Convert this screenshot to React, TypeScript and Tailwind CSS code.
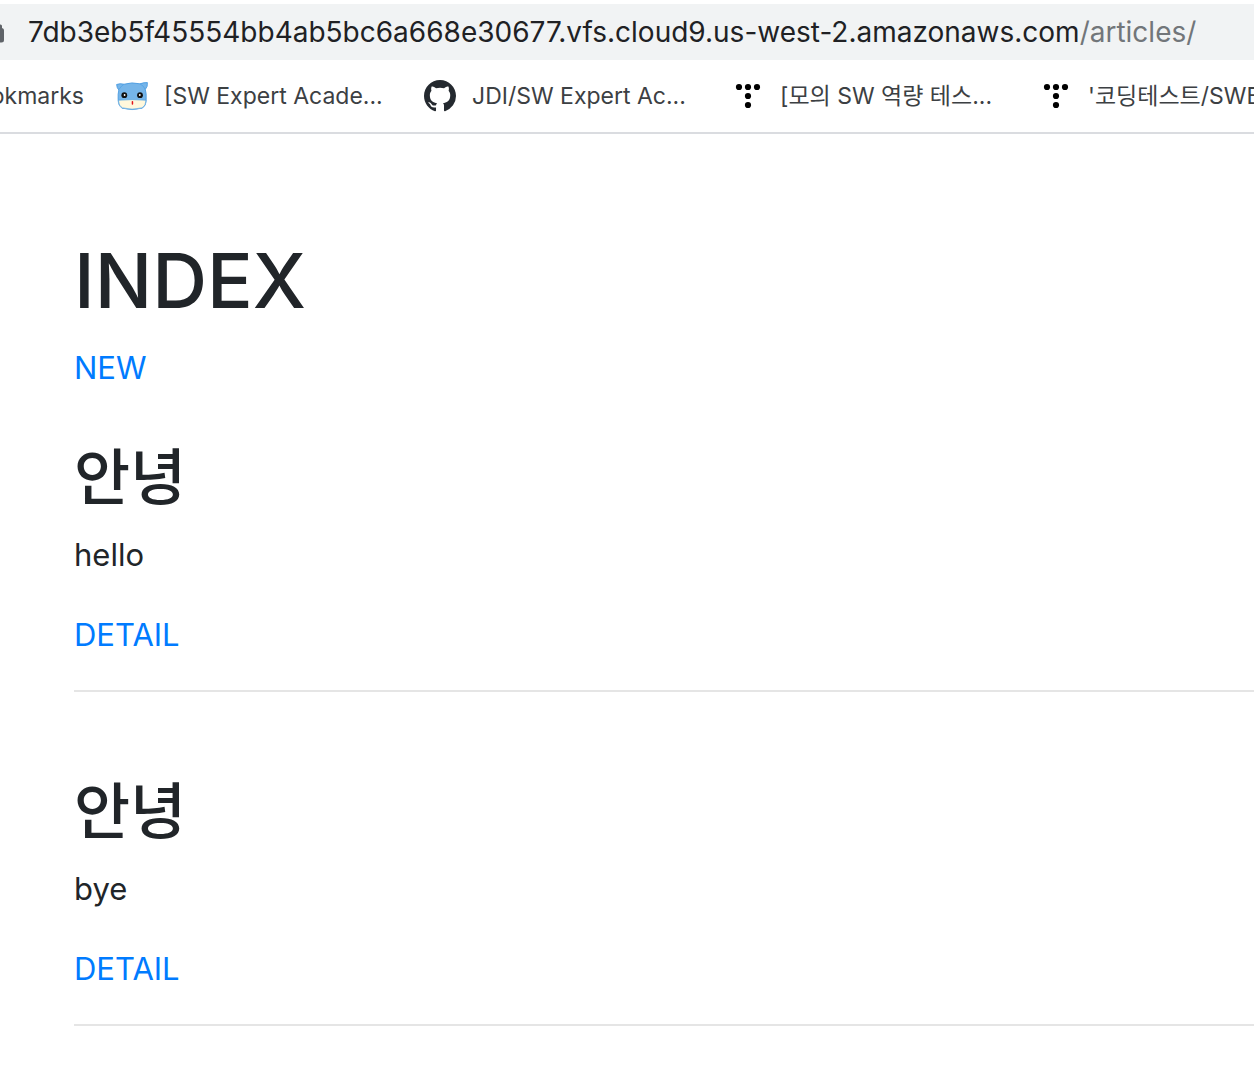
import React from "react";

const articles = [
  { id: 1, title: "안녕", content: "hello" },
  { id: 2, title: "안녕", content: "bye" },
];

function LockIcon() {
  return (
    <svg viewBox="0 0 20 24" className="h-6 w-5 shrink-0" aria-hidden="true">
      <path d="M5 8V5.500a5 5 0 0 1 10 0V8h2.500a2.500 2.500 0 0 1 2.500 2.500v9.500a2.500 2.500 0 0 1-2.500 2.500h-15A2.500 2.500 0 0 1 0 20v-9.500A2.500 2.500 0 0 1 2.500 8Z" fill="#5f6368" />
      <path d="M7.300 8V5.500a2.700 2.700 0 0 1 5.400 0V8Z" fill="#f1f3f4" />
      <path d="M15 4.500h1.500a1.500 1.500 0 0 1 1.500 1.500v3h-3Z" fill="#5f6368" />
    </svg>
  );
}

function CatIcon() {
  return (
    <svg viewBox="0 0 32 32" className="size-8 shrink-0" aria-hidden="true">
      <path
        d="M.6 4.500 Q4 3 8 4.200 Q16 1.800 24 3.800 Q28 2.300 31.400 2.600 Q32 6.500 29.300 9.500 Q30.500 13 30.200 19 Q30.300 26 26 28.200 Q16 31 6.200 28.200 Q2.200 26 2.100 19 Q1.800 14 2.800 10 Q.8 8 .6 4.500Z"
        fill="#76b5e9"
        stroke="#3d94de"
        strokeWidth=".8"
      />
      <path d="M2.300 20.200 Q16 19 30 20.200 Q30 26 26 27.900 Q16 30.500 6.400 27.900 Q2.500 26 2.300 20.200Z" fill="#fff8dc" stroke="#4a9fe5" strokeWidth=".7" />
      <path d="M3 9.500 Q5 6 8 4.200 M24 3.800 Q27.500 5.500 29.300 9.500" fill="none" stroke="#4a9fe5" strokeWidth=".7" />
      <circle cx="8.300" cy="15.200" r="2.900" fill="#111" />
      <circle cx="24" cy="15.200" r="2.900" fill="#111" />
      <circle cx="8.600" cy="15" r=".9" fill="#fff" />
      <circle cx="23.800" cy="15" r=".9" fill="#fff" />
      <rect x="15.700" y="21" width="1.500" height="3.800" rx=".7" fill="#e3141b" />
    </svg>
  );
}

function GithubIcon() {
  return (
    <svg viewBox="0 0 16 16" className="size-8 shrink-0" fill="#24292f" aria-hidden="true">
      <path d="M8 0C3.580 0 0 3.580 0 8c0 3.540 2.290 6.530 5.470 7.590.4.070.55-.17.55-.38 0-.19-.01-.82-.01-1.490-2.010.37-2.530-.49-2.690-.94-.09-.23-.48-.94-.82-1.130-.28-.15-.68-.52-.01-.53.63-.01 1.080.58 1.230.82.72 1.210 1.870.87 2.330.66.07-.52.28-.87.51-1.070-1.780-.2-3.640-.89-3.640-3.950 0-.87.31-1.590.82-2.150-.08-.2-.36-1.020.08-2.120 0 0 .67-.21 2.200.82.64-.18 1.320-.27 2-.27s1.360.09 2 .27c1.530-1.040 2.200-.82 2.200-.82.44 1.100.16 1.920.08 2.120.51.56.82 1.270.82 2.150 0 3.070-1.870 3.750-3.650 3.950.29.25.54.73.54 1.480 0 1.070-.01 1.930-.01 2.200 0 .21.15.46.55.38A8.010 8.010 0 0 0 16 8c0-4.420-3.580-8-8-8Z" />
    </svg>
  );
}

function TistoryIcon() {
  return (
    <svg viewBox="0 0 32 32" className="size-8 shrink-0" aria-hidden="true">
      <circle cx="7" cy="7" r="3.100" />
      <circle cx="16" cy="7" r="3.100" />
      <circle cx="25" cy="7" r="3.100" />
      <circle cx="16" cy="16" r="3.100" />
      <circle cx="16" cy="25" r="3.100" />
    </svg>
  );
}

const bookmarks = [
  { label: "[SW Expert Acade...", icon: <CatIcon /> },
  { label: "JDI/SW Expert Ac...", icon: <GithubIcon /> },
  { label: "[모의 SW 역량 테스...", icon: <TistoryIcon /> },
  { label: "'코딩테스트/SWE", icon: <TistoryIcon /> },
];

export default function App() {
  return (
    <div className="min-h-screen overflow-hidden bg-white font-['Inter','Noto_Sans_CJK_KR',sans-serif] text-[#212529]">
      <header className="border-b-2 border-[#dadce0] pt-1">
        <div className="flex h-14 items-center gap-6 overflow-hidden bg-[#f1f3f4]">
          <div className="flex w-1 shrink-0 justify-end">
            <LockIcon />
          </div>
          <div aria-label="Address" className="whitespace-nowrap text-[28px] leading-8 text-[#202124]">
            7db3eb5f45554bb4ab5bc6a668e30677.vfs.cloud9.us-west-2.amazonaws.com
            <span className="text-[#72767a]">/articles/</span>
          </div>
        </div>
        <nav aria-label="Bookmarks" className="flex h-[72px] items-center overflow-hidden text-[23px] text-[#3c4043]">
          <a href="#bookmarks" className="mr-8 flex w-[84px] shrink-0 justify-end whitespace-nowrap">
            okmarks
          </a>
          {bookmarks.map((b) => (
            <a key={b.label} href="#bookmark" className="flex w-[308px] shrink-0 items-center gap-4 whitespace-nowrap">
              {b.icon}
              <span>{b.label}</span>
            </a>
          ))}
        </nav>
      </header>

      <main className="pt-[98px] pl-[74px] text-[31px] leading-[48px]">
        <h1 className="mb-4 text-[76px] leading-[96px] font-medium">INDEX</h1>
        <a href="#new" className="mb-[46px] block w-fit text-[#007bff]">
          NEW
        </a>
        {articles.map((a) => (
          <article key={a.id} className="mb-20">
            <h2 className="mb-[13px] text-[61px] leading-[80px] font-medium">{a.title}</h2>
            <p className="mb-8">{a.content}</p>
            <a href="#detail" className="block w-fit text-[#007bff]">
              DETAIL
            </a>
            <hr className="mt-[31px] border-t-2 border-[#e5e5e5]" />
          </article>
        ))}
      </main>
    </div>
  );
}
